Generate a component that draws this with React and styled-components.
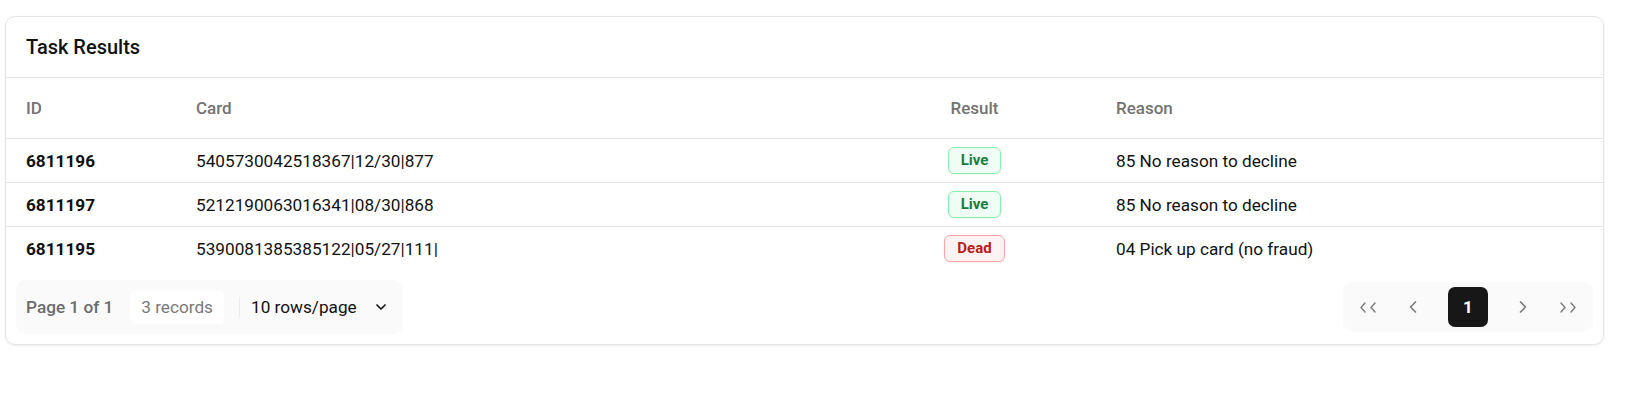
import React from 'react'
import styled, { createGlobalStyle } from 'styled-components'
import { ChevronLeft, ChevronRight, ChevronDown } from 'lucide-react'

const GlobalStyle = createGlobalStyle`
  body {
    margin: 0;
    background: #ffffff;
    font-family: Roboto, "Noto Sans", sans-serif;
    color: #111111;
  }
`

const Page = styled.div`
  padding: 16px 34px 16px 5px;
`

const Card = styled.section`
  border: 1px solid #e5e5e5;
  border-radius: 10px;
  background: #ffffff;
  box-shadow: 0 1px 3px rgba(0, 0, 0, 0.07);
  overflow: hidden;
`

const CardHeader = styled.header`
  height: 60px;
  display: flex;
  align-items: center;
  padding: 0 20px;
  border-bottom: 1px solid #e5e5e5;
`

const Title = styled.h2`
  margin: 0;
  font-size: 20px;
  font-weight: 500;
  color: #111111;
`

const Table = styled.table`
  width: 100%;
  border-collapse: collapse;
  table-layout: fixed;
`

const HeadCell = styled.th`
  height: 60px;
  padding: 0 20px;
  font-size: 17px;
  font-weight: 500;
  color: #737373;
  text-align: ${({ align }) => align || 'left'};
  border-bottom: 1px solid #e5e5e5;
`

const Row = styled.tr`
  border-bottom: 1px solid #e5e5e5;
  &:last-child {
    border-bottom: 0;
  }
`

const Cell = styled.td`
  height: 43px;
  padding: 0 20px;
  font-size: 17.2px;
  font-weight: ${({ strong }) => (strong ? 700 : 400)};
  color: #111111;
  text-align: ${({ align }) => align || 'left'};
  white-space: nowrap;
`

const badgeColors = {
  live: { bg: '#f0fdf4', border: '#86efac', color: '#15803d' },
  dead: { bg: '#fef2f2', border: '#fca5a5', color: '#b91c1c' },
}

const Badge = styled.span`
  display: inline-block;
  padding: 2px 12px;
  font-size: 15px;
  line-height: 21px;
  font-weight: 700;
  border-radius: 6px;
  background: ${({ tone }) => badgeColors[tone].bg};
  border: 1px solid ${({ tone }) => badgeColors[tone].border};
  color: ${({ tone }) => badgeColors[tone].color};
  box-shadow: 0 1px 2px rgba(0, 0, 0, 0.05);
`

const Footer = styled.footer`
  display: flex;
  align-items: center;
  justify-content: space-between;
  padding: 10px;
`

const PageInfo = styled.div`
  display: flex;
  align-items: center;
  height: 54px;
  padding: 0 14px 0 10px;
  background: #fafafa;
  border-radius: 10px;
  font-size: 17.2px;
`

const PageLabel = styled.span`
  font-weight: 500;
  color: #6b6b6b;
`

const Records = styled.span`
  margin-left: 17px;
  height: 34px;
  display: flex;
  align-items: center;
  padding: 0 11px;
  background: #ffffff;
  border-radius: 6px;
  color: #787878;
`

const Divider = styled.span`
  width: 1px;
  height: 20px;
  margin: 0 11px 0 15px;
  background: #ebebeb;
`

const RowsSelect = styled.div`
  display: flex;
  align-items: center;
  gap: 16px;
  color: #111111;
  cursor: pointer;
`

const Pager = styled.nav`
  display: flex;
  align-items: center;
  gap: 5px;
  padding: 5px;
  background: #fafafa;
  border-radius: 10px;
`

const PagerButton = styled.button`
  width: 40px;
  height: 40px;
  display: flex;
  align-items: center;
  justify-content: center;
  margin: ${({ active }) => (active ? '0 10px' : '0')};
  padding: 0;
  border: 0;
  border-radius: 7px;
  background: ${({ active }) => (active ? '#171717' : 'transparent')};
  color: ${({ active }) => (active ? '#ffffff' : '#7a7a7a')};
  font-family: inherit;
  font-size: 17px;
  font-weight: 700;
  cursor: pointer;
`

const DoubleChevron = ({ dir }) => (
  <svg width="16" height="11" viewBox="0 0 16 11" fill="none" stroke="currentColor" strokeWidth="1.4" strokeLinecap="round" strokeLinejoin="round">
    {dir === 'left' ? (
      <>
        <polyline points="5,1 1,5.5 5,10" />
        <polyline points="15,1 11,5.5 15,10" />
      </>
    ) : (
      <>
        <polyline points="1,1 5,5.5 1,10" />
        <polyline points="11,1 15,5.5 11,10" />
      </>
    )}
  </svg>
)

const results = [
  { id: '6811196', card: '5405730042518367|12/30|877', result: 'Live', reason: '85 No reason to decline' },
  { id: '6811197', card: '5212190063016341|08/30|868', result: 'Live', reason: '85 No reason to decline' },
  { id: '6811195', card: '5390081385385122|05/27|111|', result: 'Dead', reason: '04 Pick up card (no fraud)' },
]

const App = () => (
  <Page>
    <GlobalStyle />
    <Card>
      <CardHeader>
        <Title>Task Results</Title>
      </CardHeader>
      <Table>
        <colgroup>
          <col style={{ width: 170 }} />
          <col style={{ width: 677 }} />
          <col style={{ width: 243 }} />
          <col />
        </colgroup>
        <thead>
          <tr>
            <HeadCell>ID</HeadCell>
            <HeadCell>Card</HeadCell>
            <HeadCell align="center">Result</HeadCell>
            <HeadCell>Reason</HeadCell>
          </tr>
        </thead>
        <tbody>
          {results.map(r => (
            <Row key={r.id}>
              <Cell strong>{r.id}</Cell>
              <Cell>{r.card}</Cell>
              <Cell align="center">
                <Badge tone={r.result === 'Live' ? 'live' : 'dead'}>{r.result}</Badge>
              </Cell>
              <Cell>{r.reason}</Cell>
            </Row>
          ))}
        </tbody>
      </Table>
      <Footer>
        <PageInfo>
          <PageLabel>Page 1 of 1</PageLabel>
          <Records>3 records</Records>
          <Divider />
          <RowsSelect>
            10 rows/page
            <ChevronDown size={16} strokeWidth={2.5} />
          </RowsSelect>
        </PageInfo>
        <Pager>
          <PagerButton aria-label="First page"><DoubleChevron dir="left" /></PagerButton>
          <PagerButton aria-label="Previous page"><ChevronLeft size={20} /></PagerButton>
          <PagerButton active>1</PagerButton>
          <PagerButton aria-label="Next page"><ChevronRight size={20} /></PagerButton>
          <PagerButton aria-label="Last page"><DoubleChevron dir="right" /></PagerButton>
        </Pager>
      </Footer>
    </Card>
  </Page>
)

export default App
